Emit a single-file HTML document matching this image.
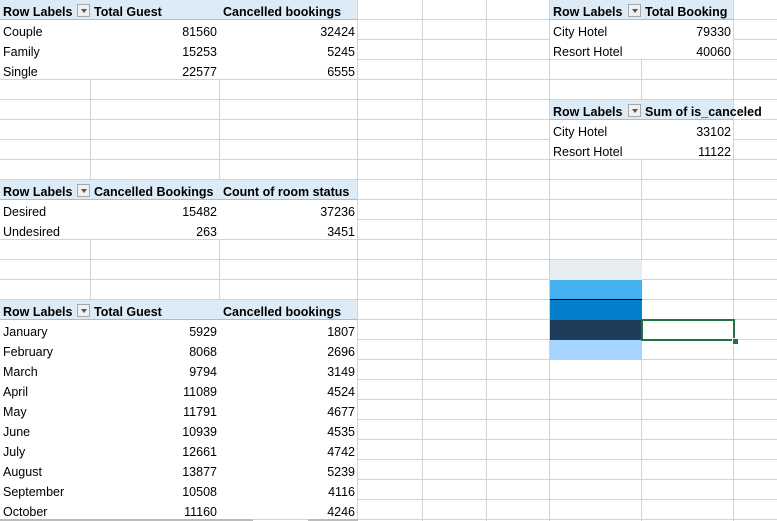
<!DOCTYPE html>
<html><head><meta charset="utf-8"><style>
html,body{margin:0;padding:0;width:777px;height:521px;overflow:hidden;background:#fff}
#g{position:relative;width:777px;height:521px;font-family:"Liberation Sans",Arial,sans-serif;font-size:12.5px;color:#000}
.v{position:absolute;top:0;width:1px;height:521px;background:#d4d4d4}
.h{position:absolute;left:0;height:1px;width:777px;background:#d4d4d4}
.b{position:absolute;background:#fff}
.t{position:absolute;height:20px;line-height:24px;white-space:nowrap}
.hd{position:absolute;background:#DDEBF7;border-bottom:1px solid #9BC2E6;height:19px}
.bo{font-weight:bold}
.dd{position:absolute;width:13px;height:13px;background:#f0f0f0;border:1px solid #a8a8a8;box-sizing:border-box}
.dd:after{content:"";position:absolute;left:3px;top:4px;border-left:3px solid transparent;border-right:3px solid transparent;border-top:4px solid #555}
</style></head><body><div id="g"></div>
<script>
var g=document.getElementById('g'),H='';
[91,220,358,423,487,550,642,734].forEach(function(x){H+='<div class="v" style="left:'+(x-1)+'px"></div>'});
for(var y=20;y<521;y+=20)H+='<div class="h" style="top:'+(y-1)+'px"></div>';
function tbl(x0,x1,y0,rows,cols,heads,data){
 var h=20*(data.length+1);
 H+='<div class="b" style="left:'+x0+'px;top:'+y0+'px;width:'+(x1-x0-1)+'px;height:'+(h-1)+'px"></div>';
 H+='<div class="hd" style="left:'+x0+'px;top:'+y0+'px;width:'+(x1-x0-1)+'px"></div>';
 H+='<div class="dd" style="left:'+(cols[1]-14)+'px;top:'+(y0+4)+'px"></div>';
 heads.forEach(function(t,i){H+='<div class="t bo" style="left:'+(cols[i]+3)+'px;top:'+y0+'px">'+t+'</div>'});
 data.forEach(function(r,j){var yy=y0+20*(j+1);
  r.forEach(function(t,i){ if(i==0)H+='<div class="t" style="left:'+(cols[0]+3)+'px;top:'+yy+'px">'+t+'</div>';
   else H+='<div class="t" style="right:'+(777-(cols[i+1]||x1)+3)+'px;top:'+yy+'px">'+t+'</div>';});});
}
var A=[0,91,220];
tbl(0,358,0,0,A,['Row Labels','Total Guest','Cancelled bookings'],[['Couple','81560','32424'],['Family','15253','5245'],['Single','22577','6555']]);
tbl(550,734,0,0,[550,642],['Row Labels','Total Booking'],[['City Hotel','79330'],['Resort Hotel','40060']]);
tbl(550,734,100,0,[550,642],['Row Labels','Sum of is_canceled'],[['City Hotel','33102'],['Resort Hotel','11122']]);
tbl(0,358,180,0,A,['Row Labels','Cancelled Bookings','Count of room status'],[['Desired','15482','37236'],['Undesired','263','3451']]);
tbl(0,358,300,0,A,['Row Labels','Total Guest','Cancelled bookings'],[['January','5929','1807'],['February','8068','2696'],['March','9794','3149'],['April','11089','4524'],['May','11791','4677'],['June','10939','4535'],['July','12661','4742'],['August','13877','5239'],['September','10508','4116'],['October','11160','4246']]);
[['#E7ECF0',260],['#45B0F0',280],['#057ECB',300],['#1E3D5A',320],['#A5D4FF',340]].forEach(function(c){H+='<div style="position:absolute;left:550px;top:'+c[1]+'px;width:92px;height:20px;background:'+c[0]+'"></div>'});
H+='<div style="position:absolute;left:550px;top:299px;width:92px;height:1px;background:#000"></div>';
H+='<div style="position:absolute;left:641px;top:319px;width:94px;height:22px;border:2px solid #217346;box-sizing:border-box"></div>';
H+='<div style="position:absolute;left:732px;top:338px;width:5px;height:5px;background:#217346;border:1px solid #fff"></div>';
H+='<div style="position:absolute;left:0;top:519px;width:253px;height:2px;background:#bbb"></div>';
H+='<div style="position:absolute;left:308px;top:519px;width:50px;height:2px;background:#bbb"></div>';
g.innerHTML=H;
</script></body></html>
